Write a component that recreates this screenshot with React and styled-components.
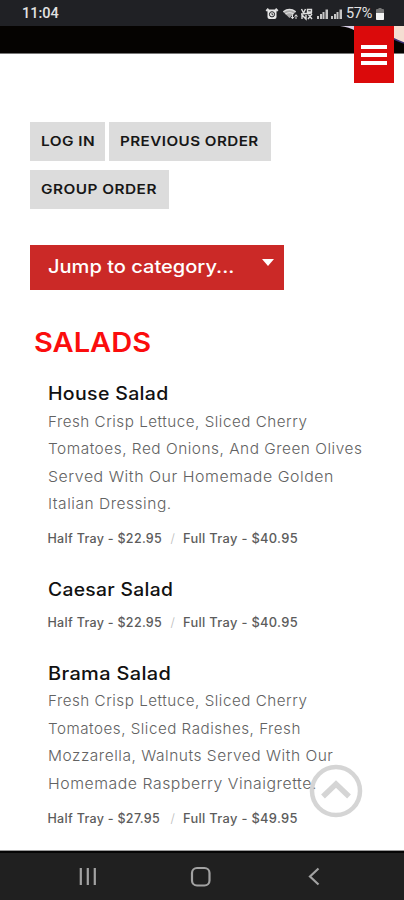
import React from 'react';
import styled, { createGlobalStyle } from 'styled-components';

const buttons = [
	{ label: 'LOG IN', width: 75, stretch: 1.14 },
	{ label: 'PREVIOUS ORDER', width: 162, stretch: 1.125 },
	{ label: 'GROUP ORDER', width: 139, stretch: 1.14 },
];

const salads = [
	{
		name: 'House Salad',
		stretch: 1.085,
		lines: [
			['Fresh Crisp Lettuce, Sliced Cherry', 1.014],
			['Tomatoes, Red Onions, And Green Olives', 1.026],
			['Served With Our Homemade Golden', 1.06],
			['Italian Dressing.', 1.035],
		],
		half: '$22.95',
		full: '$40.95',
	},
	{ name: 'Caesar Salad', stretch: 1.07, lines: [], half: '$22.95', full: '$40.95' },
	{
		name: 'Brama Salad',
		stretch: 1.11,
		lines: [
			['Fresh Crisp Lettuce, Sliced Cherry', 1.014],
			['Tomatoes, Sliced Radishes, Fresh', 1.012],
			['Mozzarella, Walnuts Served With Our', 1.034],
			['Homemade Raspberry Vinaigrette.', 1.055],
		],
		half: '$27.95',
		full: '$49.95',
	},
];

const StatusIcons = () => (
	<svg width='79' height='16' viewBox='264 5 79 16' fill='none' stroke='#dedede'>
		<rect x='266.5' y='8.500' width='9' height='9.5' rx='2' fill='#e8e8e8' stroke='none' />
		<path d='M265.300 10l2.200-2.300M276.700 10l-2.200-2.300' strokeWidth='2' />
		<circle cx='271' cy='13.3' r='2.6' stroke='#202124' strokeWidth='1' />
		<path d='M271 12v1.700h1.3' stroke='#202124' strokeWidth='0.8' />
		<path d='M282 10.8q6.500-4.800 13 0L288.500 17z' fill='#a9a9a9' stroke='none' />
		<path d='M282.300 10.800q6.200-4.500 12.400 0M284.500 13q4-2.800 8 0' strokeWidth='1.4' />
		<path d='M291.500 13.500v4M290 16l1.500 1.800 1.500-1.800M295 18v-4M293.500 15.500l1.500-1.800 1.500 1.800' strokeWidth='1' />
		<path d='M300.500 8l2 4 2-4M306.500 12V8.500h4v2.500h-4M301 18v-4l4 4v-4M307 18l4-5M307 13l4 5M300 13l11-1' strokeWidth='1.4' />
		<g fill='#c6c6c6' stroke='none'>
			<path d='M316 15h2v3h-2zM319 13h2v5h-2zM321.500 11h2v7h-2zM324.500 8.500h2.500V18h-2.500z' />
			<path d='M330 15h2v3h-2zM333 13h2v5h-2zM335.500 11h2v7h-2zM338.500 8.500h2.500V18h-2.500z' />
		</g>
	</svg>
);

const Battery = () => (
	<svg width='8' height='12' viewBox='0 0 8 12'>
		<path d='M2.500 0h3v1H7q1 0 1 1v9q0 1-1 1H1q-1 0-1-1V2q0-1 1-1h1.500z' fill='#777' />
		<path d='M0 5h8v6q0 1-1 1H1q-1 0-1-1z' fill='#f4f4f4' />
	</svg>
);

const Salad = ({ name, stretch, lines, half, full }) => (
	<Item>
		<ItemName>
			<Wide $stretch={stretch}>{name}</Wide>
		</ItemName>
		{lines.length > 0 && (
			<Description>
				{lines.map(([text, lineStretch]) => (
					<Line key={text} $stretch={lineStretch}>{text}</Line>
				))}
			</Description>
		)}
		<Prices>
			<Price>Half Tray - {half}</Price>
			<Slash>/</Slash>
			<Price $stretch={1.03}>Full Tray - {full}</Price>
		</Prices>
	</Item>
);

const App = () => (
	<Screen>
		<GlobalStyle />
		<StatusBar>
			<Clock>11:04</Clock>
			<StatusIcons />
			<Percent>57%</Percent>
			<Battery />
		</StatusBar>
		<Banner>
			<svg width='64' height='28' viewBox='340 26 64 28'>
				<path d='M340 26q9 1 16 5V26z' fill='#d9d0e8' />
				<path d='M390 26h14v17q-5-2-14-6z' fill='#f4ded2' />
				<path d='M390 37q8 4 14 6' stroke='#40357c' strokeWidth='1.500' fill='none' />
			</svg>
			<MenuButton aria-label='Menu'>
				<MenuBar />
				<MenuBar />
				<MenuBar />
			</MenuButton>
		</Banner>
		<Content>
			<Actions>
				{buttons.map(({ label, width, stretch }) => (
					<ActionButton key={label} $width={width}>
						<Wide $stretch={stretch}>{label}</Wide>
					</ActionButton>
				))}
			</Actions>
			<CategorySelect>
				<Wide $stretch={1.114}>Jump to category...</Wide>
				<Caret />
			</CategorySelect>
			<Category>
				<Wide $stretch={1.075}>SALADS</Wide>
			</Category>
			{salads.map(salad => (
				<Salad key={salad.name} {...salad} />
			))}
			<TopButton aria-label='Back to top'>
				<svg width='54' height='54' viewBox='0 0 54 54' fill='none' stroke='#c8c8c8'>
					<circle cx='27' cy='27' r='24' strokeWidth='4.500' />
					<path d='M14 32.500L27 20l13 12.500' strokeWidth='5.500' />
				</svg>
			</TopButton>
		</Content>
		<NavBar>
			<svg width='404' height='49' viewBox='0 851 404 49' fill='none' stroke='#a2a2a2'>
				<path d='M80.800 868v17M87.800 868v17M94.800 868v17' strokeWidth='2.200' />
				<rect x='192' y='868' width='17.500' height='17.500' rx='5' strokeWidth='2.200' />
				<path d='M318.500 868.500l-8.500 8 8.500 8' strokeWidth='2.200' />
			</svg>
		</NavBar>
	</Screen>
);

export default App;

const GlobalStyle = createGlobalStyle`
	body {
		margin: 0;
		background: #fff;
	}

	* {
		box-sizing: border-box;
	}

	button {
		border: 0;
		padding: 0;
		font-family: inherit;
	}

	svg {
		display: block;
		flex-shrink: 0;
	}
`;

const Screen = styled.div`
	display: flex;
	flex-direction: column;
	width: 404px;
	height: 900px;
	overflow: hidden;
	background: #fff;
	font-family: Inter, 'Open Sans', sans-serif;
	white-space: nowrap;
`;

const StatusBar = styled.header`
	display: flex;
	align-items: center;
	height: 26px;
	flex-shrink: 0;
	padding: 1px 20px 0 22px;
	background: #202125;
	color: #e2e2e2;
	font-family: Roboto, sans-serif;
	font-weight: 500;
`;

const Clock = styled.span`
	flex: 1;
	font-size: 14.5px;
`;

const Percent = styled.span`
	width: 29px;
	margin: 0 1px 0 2px;
	font-size: 14.5px;
	font-weight: 400;
	letter-spacing: -0.3px;
`;

const Banner = styled.div`
	position: relative;
	display: flex;
	justify-content: flex-end;
	height: 28px;
	flex-shrink: 0;
	background: #050301;
	border-bottom: 1px solid #777;
`;

const MenuButton = styled.button`
	position: absolute;
	top: 0;
	right: 10px;
	display: flex;
	flex-direction: column;
	align-items: center;
	gap: 4px;
	width: 40px;
	height: 57px;
	padding-top: 19px;
	background: #db0a0b;
`;

const MenuBar = styled.span`
	width: 26px;
	height: 4px;
	background: #fff;
`;

const Content = styled.main`
	position: relative;
	height: 797px;
	flex-shrink: 0;
	padding: 68px 30px 0;
`;

// Widens the letters themselves, the gaps between them stay in proportion
const Wide = styled.span`
	display: inline-block;
	transform: scaleX(${props => props.$stretch});
	transform-origin: left center;
`;

const Actions = styled.div`
	display: flex;
	flex-wrap: wrap;
	gap: 9px 4px;
	width: 260px;
`;

const ActionButton = styled.button`
	width: ${props => props.$width}px;
	height: 39px;
	padding: 0 0 1px 11px;
	background: #dcdcdc;
	color: #171717;
	text-align: left;
	font-size: 13.5px;
	font-weight: 600;
	letter-spacing: 0.4px;
`;

const CategorySelect = styled.div`
	display: flex;
	justify-content: space-between;
	width: 254px;
	height: 45px;
	margin-top: 36px;
	padding: 0 10px 0 18px;
	background: #cb2927;
	color: #fff;
	font-size: 18px;
	font-weight: 500;
	line-height: 44px;
`;

const Caret = styled.span`
	width: 0;
	height: 0;
	margin-top: 14px;
	border: 6.5px solid transparent;
	border-top: 7px solid #fff;
	border-bottom: 0;
`;

const Category = styled.h2`
	margin: 35px 0 20px 4px;
	color: #fb0d0d;
	font-size: 27px;
	font-weight: 600;
	line-height: 36px;
`;

const Item = styled.article`
	margin: 0 0 25px 17.5px;
`;

const ItemName = styled.h3`
	margin: 0;
	color: #111;
	font-size: 18px;
	font-weight: 500;
	line-height: 25px;
	letter-spacing: 0.3px;
`;

const Description = styled.div`
	padding-top: 1.5px;
`;

const Line = styled.p`
	margin: 0;
	color: #626262;
	font-size: 15px;
	font-weight: 300;
	line-height: 27.5px;
	letter-spacing: 0.5px;
	transform: scaleX(${props => props.$stretch});
	transform-origin: left center;
`;

const Prices = styled.div`
	display: flex;
	padding-top: 8.2px;
	color: #5c5c5c;
	font-size: 12.5px;
	font-weight: 500;
	line-height: 26px;
`;

const Price = styled.span`
	width: 115px;
	letter-spacing: 0.3px;
	transform: scaleX(${props => props.$stretch || 1});
	transform-origin: left center;
`;

const Slash = styled.span`
	width: 20px;
	padding-left: 8px;
	color: #bbb;
	font-weight: 300;
`;

const TopButton = styled.button`
	position: absolute;
	right: 41px;
	bottom: 33px;
	background: none;
	opacity: 0.75;
`;

const NavBar = styled.footer`
	height: 49px;
	flex-shrink: 0;
	background: #202020;
	box-shadow: 0 -1px #999, inset 0 2px #050505;
`;
